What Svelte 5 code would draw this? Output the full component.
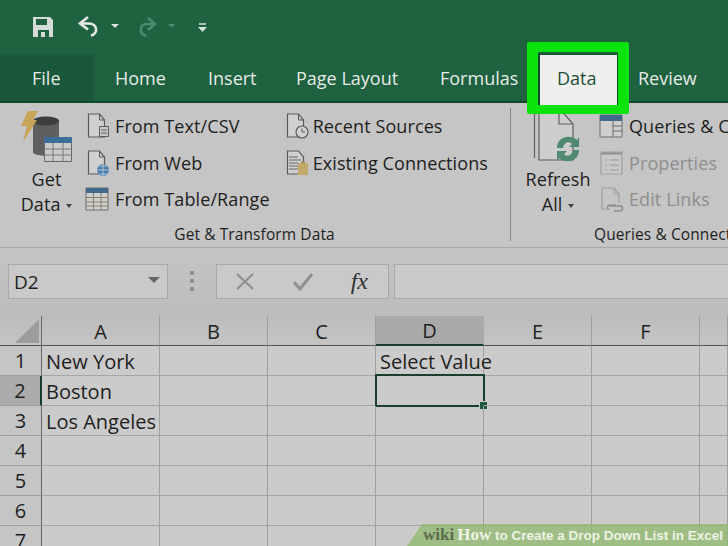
<script>
	const tabs = [
		{ label: 'Home', width: 93 },
		{ label: 'Insert', width: 88 },
		{ label: 'Page Layout', width: 144 },
		{ label: 'Formulas', width: 119 }
	];
	const columns = ['A', 'B', 'C', 'D', 'E', 'F', ''];
	const cells = {
		'1-A': 'New York',
		'2-A': 'Boston',
		'3-A': 'Los Angeles',
		'1-D': 'Select Value'
	};
	const rows = [1, 2, 3, 4, 5, 6, 7];
</script>

<div class="page">
	<header class="titlebar">
		<svg class="qat" width="230" height="54" viewBox="0 0 230 54" fill="none">
			<path d="M33 17h17l3 3v17H33z" fill="#d5dcd8" />
			<path d="M36 19h11v6H36z" fill="#1f6240" />
			<path d="M38 30h11v7H38z" fill="#1f6240" />
			<path d="M41 32h4v5h-4z" fill="#d5dcd8" />
			<path d="M88 17l-8 6.500 8 6" stroke="#e6ebe8" stroke-width="2.600" />
			<path d="M80 23.500h9c8 0 10 10 2 12" stroke="#e6ebe8" stroke-width="2.600" />
			<path d="M111 24h8l-4 4z" fill="#d9e2dc" />
			<path d="M148 18l7 6-7 6" stroke="#4d8a6c" stroke-width="2.600" />
			<path d="M155 24h-8c-7 0-9 9-1 12" stroke="#4d8a6c" stroke-width="2.600" />
			<path d="M168 24h7l-3.500 3.500z" fill="#4d8a6c" />
			<path d="M199 24h7" stroke="#d9e2dc" stroke-width="1.500" />
			<path d="M198 27h9l-4.500 5z" fill="#d9e2dc" />
		</svg>
	</header>

	<nav class="tabs">
		<span class="tab file">File</span>
		{#each tabs as tab}
			<span class="tab" style="width: {tab.width}px">{tab.label}</span>
		{/each}
		<span class="tab active">Data</span>
		<span class="tab review">Review</span>
		<span class="highlight"></span>
	</nav>

	<section class="ribbon">
		<div class="group transform">
			<div class="tools">
				<div class="big get">
					<svg width="54" height="54" viewBox="0 0 54 54" fill="none">
						<path d="M13 11v31c0 5 26 5 26 0V11z" fill="#5f5f5f" />
						<ellipse cx="26" cy="11" rx="13" ry="4.500" fill="#3d3d3d" />
						<path d="M8 1h10l-5 9h4L3 32l4-16H1z" fill="#c8a459" />
						<path d="M24.500 27.500h27v24h-27z" fill="#cbcbcb" stroke="#686868" />
						<path d="M24 27h28v6H24z" fill="#3c6c97" />
						<path d="M24 39h28M24 45h28M33 33v18M43 33v18" stroke="#777" />
					</svg>
					<span>Get</span>
					<span>Data <i class="caret"></i></span>
				</div>
				<div class="list">
					<div class="item">
						<svg width="26" height="26" viewBox="0 0 26 26" fill="none">
							<path d="M3.500 1h11l5 6v17h-16z" stroke="#5a5a5a" stroke-width="1.200" fill="#d0d0d0" />
							<path d="M14.500 1v6h5" stroke="#5a5a5a" />
							<path d="M14.500 13.500h9v10h-9z" fill="#c8c8c8" stroke="#5a5a5a" />
							<path d="M16 17h6M16 20h6" stroke="#5a5a5a" />
						</svg>
						<span>From Text/CSV</span>
					</div>
					<div class="item">
						<svg width="26" height="26" viewBox="0 0 26 26" fill="none">
							<path d="M3.500 1h11l5 6v17h-16z" stroke="#5a5a5a" stroke-width="1.200" fill="#d0d0d0" />
							<path d="M14.500 1v6h5" stroke="#5a5a5a" />
							<circle cx="18" cy="20" r="6" fill="#4a7fae" />
							<path d="M12 20h12M18 14v12M14 16h8M14 24h8" stroke="#c8d4de" stroke-width=".8" />
						</svg>
						<span>From Web</span>
					</div>
					<div class="item">
						<svg width="26" height="26" viewBox="0 0 26 26" fill="none">
							<path d="M1 2h22v22H1z" fill="#cfcfcf" stroke="#6a6a6a" />
							<path d="M1 2h22v5H1z" fill="#41698d" />
							<path d="M1 11.500h22M1 16h22M1 20h22M8.500 7v17M16 7v17" stroke="#8a7f6a" />
						</svg>
						<span>From Table/Range</span>
					</div>
				</div>
				<div class="list second">
					<div class="item">
						<svg width="26" height="26" viewBox="0 0 26 26" fill="none">
							<path d="M4.500 1h11l5 6v17h-16z" stroke="#5a5a5a" stroke-width="1.200" fill="#d0d0d0" />
							<path d="M15.500 1v6h5" stroke="#5a5a5a" />
							<circle cx="19" cy="19" r="6" fill="#d0d0d0" stroke="#5a5a5a" stroke-width="1.200" />
							<path d="M19 15.500V19h3" stroke="#5a5a5a" />
						</svg>
						<span>Recent Sources</span>
					</div>
					<div class="item">
						<svg width="26" height="26" viewBox="0 0 26 26" fill="none">
							<path d="M4.500 1h11l5 6v17h-16z" stroke="#5a5a5a" stroke-width="1.200" fill="#d0d0d0" />
							<path d="M6 7h9M6 10h12M6 13h9M6 16h9M6 19h9" stroke="#666" />
							<path d="M15 13h10v12H15z" fill="#c3a96b" />
							<path d="M18 11.500h4v2h-4z" fill="#a78f55" />
						</svg>
						<span>Existing Connections</span>
					</div>
				</div>
			</div>
			<div class="caption">Get &amp; Transform Data</div>
		</div>
		<div class="group connect">
			<div class="tools">
				<div class="big refresh">
					<svg width="50" height="56" viewBox="0 0 50 56" fill="none">
						<path d="M1.500 0v50" stroke="#5f5f5f" stroke-width="1.200" />
						<path d="M6 0h20l14 16v36H6z" fill="#cdcdcd" stroke="#5f5f5f" stroke-width="1.200" />
						<path d="M26 0v16h14" stroke="#5f5f5f" stroke-width="1.200" />
						<path d="M24 40c0-12 14-14 20-8l2-3v10h-10l3-3c-3-3-8-2-9 4z" fill="#4f8a70" />
						<path d="M46 42c0 12-14 14-20 8l-2 3V43h10l-3 3c3 3 8 2 9-4z" fill="#4f8a70" />
					</svg>
					<span>Refresh</span>
					<span>All <i class="caret"></i></span>
				</div>
				<div class="list">
					<div class="item">
						<svg width="26" height="26" viewBox="0 0 26 26" fill="none">
							<path d="M1 2h22v22H1z" fill="#cfcfcf" stroke="#6a6a6a" />
							<path d="M1 2h22v6H1z" fill="#41698d" />
							<path d="M14 8v16M14 13h9M14 18h9" stroke="#6a6a6a" />
						</svg>
						<span>Queries &amp; Connections</span>
					</div>
					<div class="item muted">
						<svg width="26" height="26" viewBox="0 0 26 26" fill="none">
							<path d="M2 2h21v22H2z" fill="#c8c8c8" stroke="#a0a0a0" stroke-width="1.200" />
							<path d="M2 3.500h21" stroke="#8f8f8f" stroke-width="2" />
							<path d="M6 10h2M6 15h2M6 20h2M11 10h9M11 15h9M11 20h9" stroke="#9a9a9a" stroke-width="1.200" />
						</svg>
						<span>Properties</span>
					</div>
					<div class="item muted">
						<svg width="26" height="26" viewBox="0 0 26 26" fill="none">
							<path d="M3 2h12l5 6v9M3 2v21h8" stroke="#a0a0a0" stroke-width="1.200" />
							<path d="M15 2v6h5" stroke="#a0a0a0" />
							<path d="M11 20h10a2.500 2.500 0 0 1 0 5h-6M9 23a2.500 2.500 0 0 1 2-4h6" stroke="#8f8f8f" stroke-width="1.500" />
						</svg>
						<span>Edit Links</span>
					</div>
				</div>
			</div>
			<div class="caption">Queries &amp; Connections</div>
		</div>
	</section>

	<section class="formula">
		<div class="namebox">
			<span>D2</span>
			<i class="namecaret"></i>
		</div>
		<div class="grip"><b></b><b></b><b></b></div>
		<div class="actions">
			<svg width="20" height="20" viewBox="0 0 20 20" fill="none">
				<path d="M2 2l16 15M18 2L2 17" stroke="#8f8f8f" stroke-width="2.200" />
			</svg>
			<svg width="22" height="20" viewBox="0 0 22 20" fill="none">
				<path d="M2 10l6 7L20 2" stroke="#8f8f8f" stroke-width="3" />
			</svg>
			<span class="fx">fx</span>
		</div>
		<div class="input"></div>
	</section>

	<section class="sheet">
		<div class="head corner"><i class="triangle"></i></div>
		{#each columns as col}
			<div class="head" class:selected={col === 'D'}>{col}</div>
		{/each}
		{#each rows as row}
			<div class="rowhead" class:selected={row === 2}>{row}</div>
			{#each columns as col}
				<div class="cell" class:current={row === 2 && col === 'D'}>
					{cells[row + '-' + col] ?? ''}
					{#if row === 2 && col === 'D'}<i class="handle"></i>{/if}
				</div>
			{/each}
		{/each}
	</section>

	<footer class="watermark"><b>wiki</b><strong>How</strong> to Create a Drop Down List in Excel</footer>
</div>

<style>
	:global(body) {
		margin: 0;
	}

	.page {
		position: relative;
		width: 728px;
		height: 546px;
		overflow: hidden;
		background: #cbcbcb;
		color: #1e1e1e;
		font-family: 'Open Sans', sans-serif;
	}

	.titlebar {
		height: 54px;
		background: #1e6240;
	}

	.qat {
		display: block;
	}

	.tabs {
		position: relative;
		display: flex;
		height: 47px;
		background: #1e6240;
		border-bottom: 2px solid #0f4a2c;
		color: #e6ebe6;
		font-size: 18px;
		line-height: 48px;
	}

	.tab {
		flex: none;
		box-sizing: border-box;
		padding-left: 21px;
	}

	.tab.file {
		width: 94px;
		padding-left: 32px;
		background: #19583a;
	}

	.tab.active {
		width: 81px;
		height: 51px;
		padding-left: 17px;
		background: #efefee;
		color: #1d4f36;
		border: solid #12492c;
		border-width: 0 2px;
		box-shadow: inset 0 1px 0 #12492c;
	}

	.tab.review {
		padding-left: 19px;
	}

	.highlight {
		position: absolute;
		left: 527px;
		top: -12px;
		width: 102px;
		height: 72px;
		box-sizing: border-box;
		border: 11px solid #0ce30c;
		border-bottom-width: 9px;
		border-top-width: 10px;
		border-radius: 2px;
	}

	.ribbon {
		display: flex;
		height: 145px;
		background: #c5c5c5;
		border-bottom: 1px solid #aaa;
		box-sizing: border-box;
		font-size: 18px;
		letter-spacing: 0.1px;
	}

	.group {
		display: flex;
		flex-direction: column;
		flex: none;
		box-sizing: border-box;
	}

	.group.transform {
		position: relative;
		width: 511px;
	}

	.group.transform::after {
		content: '';
		position: absolute;
		right: 0;
		top: 5px;
		bottom: 6px;
		width: 1px;
		background: #848484;
	}

	.group.connect {
		width: 217px;
	}

	.tools {
		display: flex;
		flex: 1;
		min-height: 0;
	}

	.big {
		display: flex;
		flex-direction: column;
		align-items: center;
		flex: none;
		line-height: 25px;
		box-sizing: border-box;
	}

	.big svg {
		margin-bottom: 3px;
	}

	.big.get {
		width: 85px;
		padding: 7px 0 0 8px;
	}

	.big.refresh {
		width: 88px;
		padding: 5px 0 0 6px;
	}

	.caret {
		display: inline-block;
		vertical-align: middle;
		margin-left: 1px;
		border: 3.500px solid transparent;
		border-top: 4px solid #444;
		border-bottom: 0;
	}

	.list {
		display: flex;
		flex-direction: column;
		gap: 10.500px;
		padding-top: 10px;
	}

	.list.second {
		margin-left: 13px;
	}

	.item {
		display: flex;
		align-items: center;
		gap: 4px;
		height: 26px;
		white-space: nowrap;
	}

	.item.muted {
		color: #8e8e8e;
	}

	.caption {
		height: 26px;
		text-align: center;
		font-size: 15.500px;
		line-height: 26px;
		white-space: nowrap;
		overflow: hidden;
	}

	.group.transform .caption {
		padding-right: 2px;
	}

	.group.connect .caption {
		text-align: left;
		padding-left: 83px;
	}

	.formula {
		display: flex;
		align-items: center;
		height: 68px;
		padding-left: 8px;
		box-sizing: border-box;
		background: linear-gradient(#c4c4c4, #bcbcbc);
	}

	.namebox,
	.actions,
	.input {
		display: flex;
		align-items: center;
		height: 35px;
		box-sizing: border-box;
		background: #c9c9c9;
		border: 1px solid #a9a9a9;
	}

	.formula > * {
		position: relative;
		top: -1px;
	}

	.namebox {
		justify-content: space-between;
		width: 160px;
		padding: 2px 7px 0 5px;
		font-size: 19px;
	}

	.namecaret {
		margin-top: -5px;
		border: 6px solid transparent;
		border-top: 6px solid #666;
		border-bottom: 0;
	}

	.grip {
		display: flex;
		flex-direction: column;
		gap: 4px;
		width: 48px;
		align-items: center;
	}

	.grip b {
		width: 4px;
		height: 4px;
		background: #8e8e8e;
	}

	.actions {
		justify-content: space-between;
		width: 173px;
		padding: 1px 20px 0 18px;
	}

	.fx {
		font-family: 'Liberation Serif', serif;
		font-style: italic;
		font-size: 24px;
		color: #333;
	}

	.input {
		flex: 1;
		margin-left: 5px;
		border-right: 0;
	}

	.sheet {
		display: grid;
		grid-template-columns: 42px 118px 108px 108px 108px 108px 108px 28px;
		grid-auto-rows: 30px;
	}

	.head {
		display: flex;
		align-items: center;
		justify-content: center;
		position: relative;
		box-sizing: border-box;
		background: linear-gradient(#bcbcbc, #c4c4c4);
		border-right: 1px solid #9e9e9e;
		border-bottom: 1px solid #555;
		font-size: 20px;
		padding-top: 1px;
	}

	.head.selected {
		background: #a9a9a9;
		border-bottom: 2px solid #153f2a;
		border-right-color: #a9a9a9;
	}

	.corner {
		border-right: 1px solid #666;
	}

	.triangle {
		position: absolute;
		right: 2px;
		bottom: 2px;
		border-style: solid;
		border-width: 0 0 24px 24px;
		border-color: transparent transparent #9c9c9c transparent;
	}

	.rowhead {
		display: flex;
		align-items: center;
		justify-content: center;
		box-sizing: border-box;
		background: #c5c5c5;
		border-right: 1px solid #666;
		border-bottom: 1px solid #a0a0a0;
		font-size: 20px;
	}

	.rowhead.selected {
		background: #ababab;
		border-right: 2px solid #153f2a;
	}

	.cell {
		position: relative;
		box-sizing: border-box;
		padding-left: 4px;
		border-right: 1px solid #a0a0a0;
		border-bottom: 1px solid #a6a6a6;
		font-size: 20px;
		line-height: 31px;
		white-space: nowrap;
	}

	.cell.current {
		border: 2px solid #173f2b;
		margin: -2px -1px 0 -1px;
		height: 33px;
	}

	.handle {
		position: absolute;
		right: -5px;
		bottom: -5px;
		width: 7px;
		height: 7px;
		background: #1c5a3c;
		border: 1px solid #cbcbcb;
	}

	.watermark {
		position: absolute;
		left: 407px;
		right: 0;
		bottom: 0;
		height: 22px;
		padding-left: 16px;
		box-sizing: border-box;
		background: rgba(140, 185, 105, 0.72);
		clip-path: polygon(15px 0, 100% 0, 100% 100%, 0 100%);
		color: #eef3e6;
		font-family: 'Liberation Sans', sans-serif;
		font-size: 13.500px;
		font-weight: 700;
		line-height: 22px;
		white-space: nowrap;
	}

	.watermark b {
		color: #5c6b50;
		font-family: 'Liberation Serif', serif;
		font-size: 17px;
		margin-right: 3px;
	}

	.watermark strong {
		font-family: 'Liberation Serif', serif;
		font-size: 17px;
	}
</style>
